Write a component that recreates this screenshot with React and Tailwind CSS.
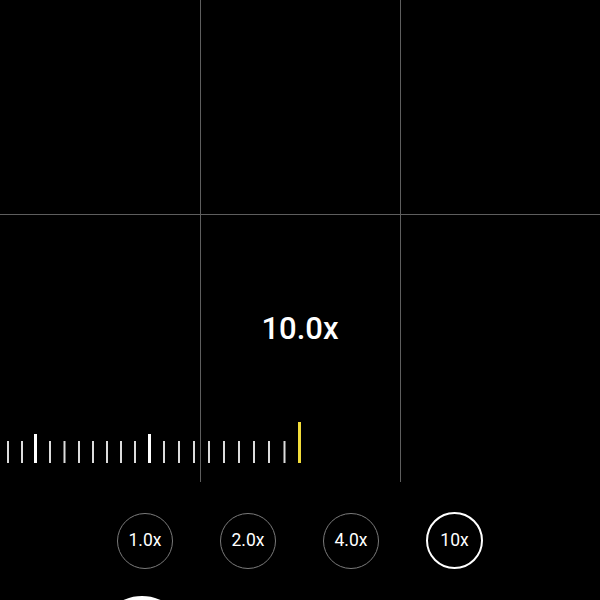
import React from "react";

const ticks = [
  { c: 8, t: "s" }, { c: 22, t: "s" }, { c: 35.5, t: "l" }, { c: 50, t: "s" },
  { c: 64.5, t: "s" }, { c: 79, t: "s" }, { c: 93, t: "s" }, { c: 107, t: "s" },
  { c: 121, t: "s" }, { c: 135, t: "s" }, { c: 149.5, t: "l" }, { c: 164, t: "s" },
  { c: 179, t: "s" }, { c: 194, t: "s" }, { c: 209, t: "s" }, { c: 224, t: "s" },
  { c: 239, t: "s" }, { c: 254, t: "s" }, { c: 269, t: "s" }, { c: 284.5, t: "s" },
  { c: 299.5, t: "y" },
];

function Ruler() {
  return (
    <svg width="600" height="41" viewBox="0 0 600 41" className="block">
      {ticks.map((k, i) => {
        if (k.t === "s")
          return <rect key={i} x={k.c - 1} y={19} width={2} height={22} fill="#dcdcdc" />;
        if (k.t === "l")
          return <rect key={i} x={k.c - 1.5} y={12} width={3} height={29} fill="#ffffff" />;
        return <rect key={i} x={k.c - 1.5} y={0} width={3} height={41} fill="#f2dc3a" />;
      })}
    </svg>
  );
}

function ZoomBtn({ label, active }) {
  return (
    <div
      className={
        active
          ? "w-[57px] h-[57px] rounded-full border-2 border-white flex items-center justify-center text-white text-[17.5px]"
          : "w-[56px] h-[56px] rounded-full border border-[#7a7a7a] flex items-center justify-center text-white text-[17.5px]"
      }
    >
      {label}
    </div>
  );
}

export default function App() {
  return (
    <div className="w-[600px] h-[600px] bg-black overflow-hidden font-['Roboto',sans-serif]">
      <div className="relative h-[482px]">
        <div className="absolute left-[200px] top-0 bottom-0 w-px bg-[#5e5e5e]" />
        <div className="absolute left-[400px] top-0 bottom-0 w-px bg-[#5e5e5e]" />
        <div className="absolute left-0 right-0 top-[214px] h-px bg-[#5e5e5e]" />
        <div className="relative pt-[312px]">
          <div className="h-[34px] leading-[34px] text-center text-white text-[31px] font-medium">10.0x</div>
          <div className="mt-[76px]">
            <Ruler />
          </div>
        </div>
      </div>
      <div className="mt-[30px] flex justify-center items-center gap-[47px]">
        <ZoomBtn label="1.0x" />
        <ZoomBtn label="2.0x" />
        <ZoomBtn label="4.0x" />
        <ZoomBtn label="10x" active />
      </div>
      <div className="mt-[27px] ml-[97px] w-[90px] h-[90px] rounded-full bg-white" />
    </div>
  );
}
